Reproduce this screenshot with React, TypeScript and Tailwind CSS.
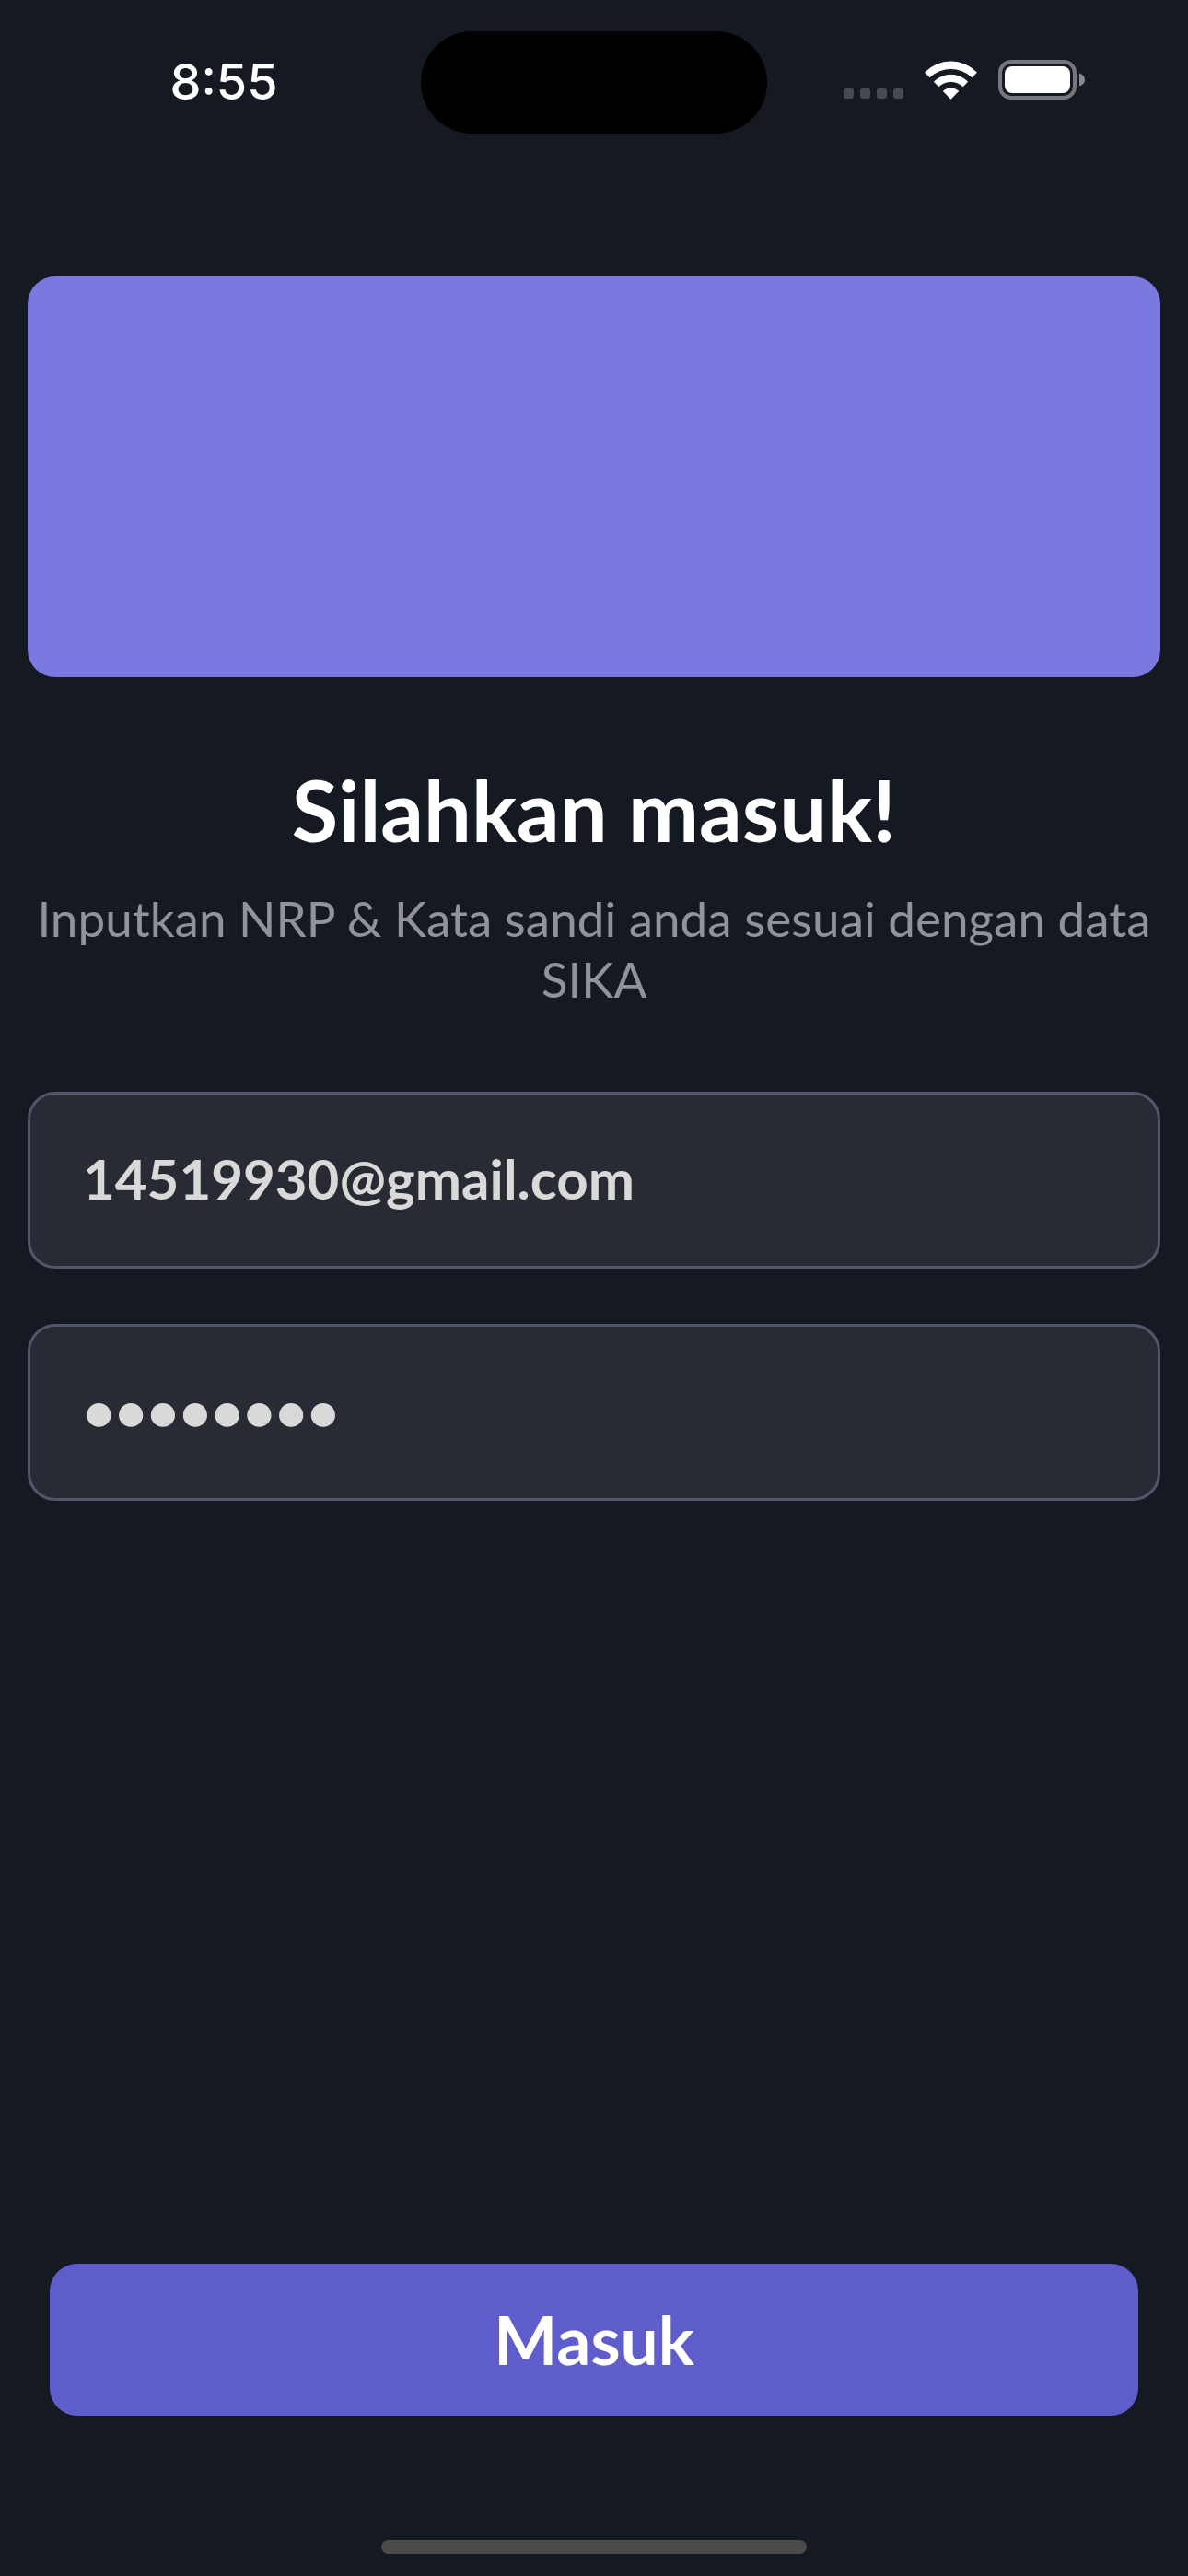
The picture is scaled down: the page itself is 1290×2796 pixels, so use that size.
import React from "react";

function StatusBar() {
  return (
    <header className="grid h-[178px] shrink-0 grid-cols-3 items-center font-[Inter,sans-serif] text-white">
      <div className="pl-[56px] text-center text-[54px] leading-[60px] font-medium">8:55</div>
      <div className="mx-auto h-[111px] w-[376px] rounded-full bg-black" />
      <div className="flex items-center justify-end gap-[23px] pr-[112px] pb-[5px]">
        <svg width="65" height="11" viewBox="0 0 65 11" className="mt-[30px] fill-[#484a52]" aria-hidden="true">
          <rect x="0" width="11" height="11" rx="3" />
          <rect x="18" width="11" height="11" rx="3" />
          <rect x="36" width="11" height="11" rx="3" />
          <rect x="54" width="11" height="11" rx="3" />
        </svg>
        <svg
          width="57"
          height="42"
          viewBox="0 0 57 42"
          className="fill-white stroke-white"
          strokeWidth="1"
          strokeLinejoin="round"
          aria-hidden="true"
        >
          <path d="M.6 12.700A39 39 0 0 1 56.400 12.700L51.500 17.800A33 33 0 0 0 5.500 17.800Z" />
          <path d="M10.400 22.700A26 26 0 0 1 46.600 22.700L41.700 27.800A19 19 0 0 0 15.300 27.800Z" />
          <path d="M20.300 32.800A13.500 13.500 0 0 1 36.700 32.800L28.500 41.300Z" />
        </svg>
        <svg width="94" height="43" viewBox="0 0 94 43" fill="none" aria-hidden="true">
          <rect x="2" y="2" width="81" height="39" rx="12" stroke="#76777c" strokeWidth="4" />
          <rect x="7" y="7" width="71" height="29" rx="8" fill="white" />
          <path d="M88 14.500Q94 16.500 94 21.500T88 28.500Z" fill="#8a8b8f" />
        </svg>
      </div>
    </header>
  );
}

const fieldClass =
  "h-[192px] w-full rounded-[30px] border-3 border-[#52566a] bg-[#292b34] pr-[57px] pb-[4px] pl-[57px] text-[60px] font-bold text-[#d9d9d9] outline-none";

export default function App() {
  return (
    <div className="flex min-h-screen flex-col bg-[#151a22] font-[Lato,sans-serif]">
      <StatusBar />
      <form className="flex grow flex-col" onSubmit={(e) => e.preventDefault()}>
        <main className="grow px-[30px] pt-[122px]">
          <div className="h-[435px] rounded-[30px] bg-[#7b78e0]" />
          <h1 className="mt-[90px] text-center text-[92px] leading-[108px] font-bold text-white">Silahkan masuk!</h1>
          <p className="mt-[31px] text-center text-[53px] leading-[66px] text-[#929298]">
            Inputkan NRP &amp; Kata sandi anda sesuai dengan data SIKA
          </p>
          <div className="mt-[89px] flex flex-col gap-[60px]">
            <input className={fieldClass} type="text" aria-label="NRP" defaultValue="14519930@gmail.com" />
            <input className={fieldClass} type="password" aria-label="Kata sandi" defaultValue="12345678" />
          </div>
        </main>
        <footer className="flex flex-col items-center px-[54px] pb-[24px]">
          <button type="submit" className="h-[165px] w-full rounded-[30px] bg-[#5f5dcb] text-[73px] font-bold text-white">
            Masuk
          </button>
          <div className="mt-[135px] h-[15px] w-[462px] rounded-full bg-[#4b4b4b]" />
        </footer>
      </form>
    </div>
  );
}
